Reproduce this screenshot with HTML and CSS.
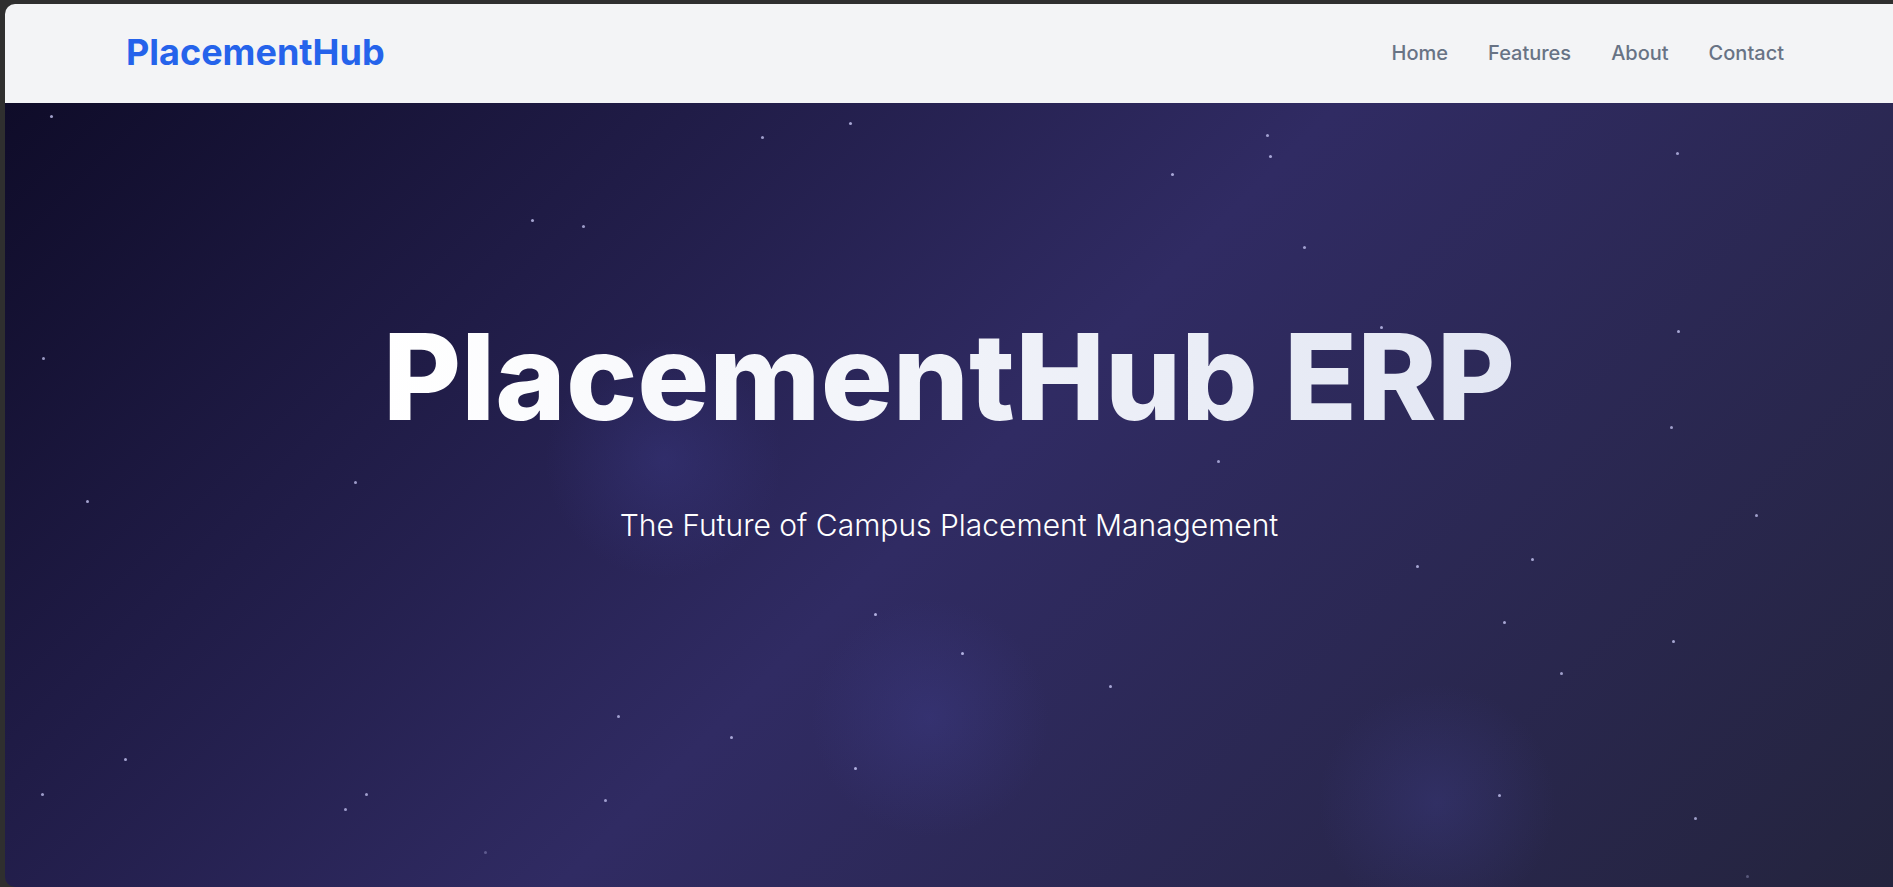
FILE: index.html
```html
<!DOCTYPE html>
<html>
<head>
<meta charset="UTF-8">
<title>PlacementHub ERP</title>
<link rel="stylesheet" href="styles.css">
</head>
<body>
<div class="window">
	<!-- 상단 내비게이션 -->
	<header class="topbar">
		<a class="logo" href="#">PlacementHub</a>
		<nav class="menu">
			<a href="#">Home</a>
			<a href="#">Features</a>
			<a href="#">About</a>
			<a href="#">Contact</a>
		</nav>
	</header>

	<!-- 히어로 영역 -->
	<section class="hero">
		<span class="glow glow-1"></span>
		<span class="glow glow-2"></span>
		<span class="glow glow-3"></span>
		<span class="stars"></span>
		<span class="stars dim"></span>
		<h1 class="hero-title">PlacementHub ERP</h1>
		<p class="hero-sub">The Future of Campus Placement Management</p>
	</section>
</div>
</body>
</html>
```
FILE: styles.css
```css
html,body{margin:0; padding:0; height:100%;}
body{background:#2f2f2f; font-family:Inter, "Noto Sans", sans-serif; overflow:hidden;}
a{text-decoration:none;}

.window{margin:4px 0 0 5px; height:883px; border-radius:10px 0 0 10px; overflow:hidden; display:flex; flex-direction:column;}

.topbar{height:99px; flex:none; background:#f3f4f6; display:flex; align-items:center; justify-content:space-between; padding:0 109px 0 121px;}
.logo{color:#2563eb; font-size:36px; font-weight:700; line-height:1.5; margin-bottom:4px;}
.menu{display:flex; gap:40px; margin-bottom:2px;}
.menu a{color:#687385; font-size:20px; font-weight:500; line-height:1.5;}
.menu a:hover{color:#2563eb;}

.hero{position:relative; flex:1; overflow:hidden; background:linear-gradient(135deg, #0f0c29 0%, #302b63 50%, #24243e 100%); display:flex; flex-direction:column; align-items:center; padding-top:214px;}

.glow{position:absolute; border-radius:50%; width:240px; height:240px; background:radial-gradient(circle, rgba(70,70,160,0.28) 0%, rgba(70,70,160,0) 70%);}
.glow-1{left:539px; top:236px;}
.glow-2{left:805px; top:495px;}
.glow-3{left:1312px; top:580px;}

/* 별: 점 하나에 그림자를 여러 개 */
.stars{position:absolute; left:0; top:0; width:3px; height:3px; border-radius:50%;
	box-shadow:
	45px 12px rgba(210,210,255,.75), 844px 19px rgba(210,210,255,.75), 756px 33px rgba(210,210,255,.7),
	1261px 31px rgba(210,210,255,.7), 1264px 52px rgba(210,210,255,.75), 1166px 70px rgba(210,210,255,.75),
	1671px 49px rgba(210,210,255,.7), 526px 116px rgba(210,210,255,.75), 577px 122px rgba(210,210,255,.7),
	1298px 143px rgba(210,210,255,.7), 37px 254px rgba(210,210,255,.7), 1375px 223px rgba(210,210,255,.75),
	1672px 227px rgba(210,210,255,.75), 1665px 323px rgba(210,210,255,.7), 1212px 357px rgba(210,210,255,.7),
	349px 378px rgba(210,210,255,.7), 81px 397px rgba(210,210,255,.75), 1750px 411px rgba(210,210,255,.7),
	1526px 455px rgba(210,210,255,.75), 1411px 462px rgba(210,210,255,.75), 869px 510px rgba(210,210,255,.8),
	1498px 518px rgba(210,210,255,.75), 1667px 537px rgba(210,210,255,.75), 956px 549px rgba(210,210,255,.8),
	1555px 569px rgba(210,210,255,.7), 1104px 582px rgba(210,210,255,.75), 612px 612px rgba(210,210,255,.7),
	725px 633px rgba(210,210,255,.75), 119px 655px rgba(210,210,255,.75), 849px 664px rgba(210,210,255,.8),
	36px 690px rgba(210,210,255,.7), 360px 690px rgba(210,210,255,.7), 1493px 691px rgba(210,210,255,.75),
	339px 705px rgba(210,210,255,.7), 599px 696px rgba(210,210,255,.7), 1689px 714px rgba(210,210,255,.7);}
.stars.dim{box-shadow:479px 748px rgba(210,210,255,.3), 1741px 772px rgba(210,210,255,.3);}

.hero-title{position:relative; margin:0; font-size:120px; font-weight:800; line-height:1;
	background:linear-gradient(to right, #ffffff, #e2e6f3); -webkit-background-clip:text; background-clip:text; color:transparent;}
.hero-sub{position:relative; margin:66px 0 0; color:#ffffff; font-size:30px; font-weight:300; line-height:1.5;}
```
